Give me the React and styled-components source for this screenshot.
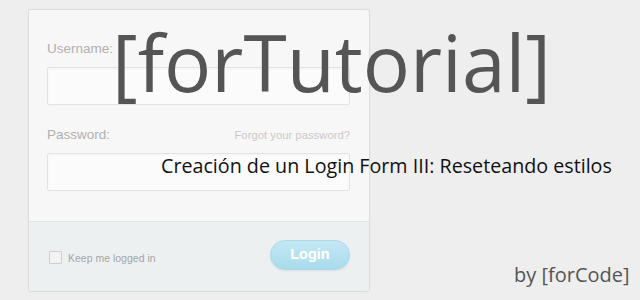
import React from "react";
import styled, { createGlobalStyle } from "styled-components";

const Global = createGlobalStyle`
  html, body { margin: 0; padding: 0; background: #eeeeee; }
  body { width: 640px; height: 300px; overflow: hidden; font-family: "Liberation Sans", Arial, sans-serif; }
`;

const Stage = styled.div`
  position: relative;
  width: 640px;
  height: 300px;
  padding: 9px 0 0 28px;
  box-sizing: border-box;
`;

const Card = styled.form`
  width: 342px;
  height: 283px;
  box-sizing: border-box;
  border: 1px solid #dcdcdc;
  border-radius: 3px;
  background: #f7f7f7;
  box-shadow: 0 0 2px rgba(0,0,0,0.05);
  display: flex;
  flex-direction: column;
  overflow: hidden;
`;

const Fields = styled.div`
  height: 211px;
  padding: 31px 19px 0 18px;
  box-sizing: border-box;
  display: flex;
  flex-direction: column;
`;

const LabelRow = styled.div`
  display: flex;
  justify-content: space-between;
  align-items: baseline;
  height: 16px;
  margin-top: ${(p) => p.$gap || 0}px;
`;

const Label = styled.label`
  font-size: 13.5px;
  color: #b0b0b0;
  line-height: 16px;
`;

const Forgot = styled.a`
  font-size: 11.3px;
  color: #c9c9c9;
  text-decoration: none;
`;

const Input = styled.div`
  margin-top: 10px;
  height: 38px;
  box-sizing: border-box;
  border: 1px solid #e2e2e2;
  border-radius: 2px;
  background: #fbfbfb;
  box-shadow: inset 0 1px 2px rgba(0,0,0,0.03);
`;

const Footer = styled.div`
  flex: 1;
  border-top: 1px solid #e1e4e5;
  background: #edf0f1;
  display: flex;
  align-items: center;
  justify-content: space-between;
  padding: 0 19px 3px 20px;
`;

const Keep = styled.label`
  display: flex;
  align-items: center;
  gap: 6px;
  font-size: 10.5px;
  color: #a5a5a5;
  margin-top: 5px;
`;

const Box = styled.span`
  width: 11px;
  height: 11px;
  border: 1px solid #cfcfcf;
  background: #f3f3f3;
  border-radius: 1px;
`;

const LoginButton = styled.span`
  width: 80px;
  height: 30px;
  box-sizing: border-box;
  border-radius: 15px;
  border: 1px solid #a9d9ea;
  background: linear-gradient(#c4e8f4, #a8dbec);
  box-shadow: 0 1px 2px rgba(0,0,0,0.08);
  color: #ffffff;
  font-weight: bold;
  font-size: 14.5px;
  display: flex;
  align-items: center;
  justify-content: center;
  padding-bottom: 2px;
  text-shadow: 0 0 1px rgba(255,255,255,0.4);
`;

const Title = styled.div`
  position: absolute;
  left: 112px;
  top: 7px;
  font-family: "Open Sans", sans-serif;
  font-size: 78.5px;
  line-height: 110px;
  color: #555555;
  white-space: nowrap;
`;

const Subtitle = styled.div`
  position: absolute;
  left: 161px;
  top: 153px;
  font-family: "Open Sans", sans-serif;
  font-size: 19.7px;
  line-height: 26px;
  color: #111111;
  white-space: nowrap;
`;

const Byline = styled.div`
  position: absolute;
  left: 514px;
  top: 260px;
  font-family: "Open Sans", sans-serif;
  font-size: 20px;
  line-height: 30px;
  color: #555555;
  white-space: nowrap;
`;

export default function App() {
  return (
    <Stage>
      <Global />
      <Card>
        <Fields>
          <LabelRow>
            <Label>Username:</Label>
          </LabelRow>
          <Input />
          <LabelRow $gap={22}>
            <Label>Password:</Label>
            <Forgot>Forgot your password?</Forgot>
          </LabelRow>
          <Input />
        </Fields>
        <Footer>
          <Keep>
            <Box />
            Keep me logged in
          </Keep>
          <LoginButton>Login</LoginButton>
        </Footer>
      </Card>
      <Title>[forTutorial]</Title>
      <Subtitle>Creación de un Login Form III: Reseteando estilos</Subtitle>
      <Byline>by [forCode]</Byline>
    </Stage>
  );
}
